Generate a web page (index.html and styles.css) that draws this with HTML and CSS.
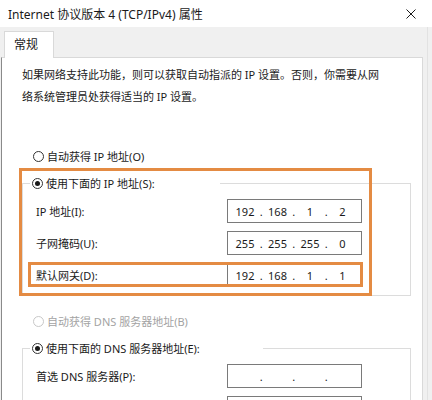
FILE: index.html
```html
<!DOCTYPE html>
<html lang="zh-CN">
<head>
    <meta charset="UTF-8">
    <meta name="viewport" content="width=device-width, initial-scale=1.0">
    <title>Internet 协议版本 4 (TCP/IPv4) 属性</title>
    <link rel="stylesheet" href="styles.css">
</head>
<body>
    <div class="titlebar">
        <span class="title">Internet 协议版本 4 (TCP/IPv4) 属性</span>
        <svg class="close" width="10" height="10" viewBox="0 0 10 10">
            <path d="M0.5 0.5 L9.5 9.5 M9.5 0.5 L0.5 9.5" stroke="#1a1a1a" stroke-width="1" fill="none"/>
        </svg>
    </div>

    <div class="sheet">
        <div class="tabs">
            <div class="tab">常规</div>
        </div>
        <div class="panel">
            <p class="intro">如果网络支持此功能，则可以获取自动指派的 IP 设置。否则，你需要从网<br>络系统管理员处获得适当的 IP 设置。</p>

            <div class="option"><span class="radio"></span>自动获得 IP 地址(O)</div>
            <fieldset class="group">
                <legend class="option legend-ip"><span class="radio on"></span>使用下面的 IP 地址(S):</legend>
                <div class="fields">
                    <label>IP 地址(I):</label>
                    <div class="ip"><span>192</span><span class="dot">.</span><span>168</span><span class="dot">.</span><span>1</span><span class="dot">.</span><span>2</span></div>
                    <label>子网掩码(U):</label>
                    <div class="ip"><span>255</span><span class="dot">.</span><span>255</span><span class="dot">.</span><span>255</span><span class="dot">.</span><span>0</span></div>
                    <label>默认网关(D):</label>
                    <div class="ip"><span>192</span><span class="dot">.</span><span>168</span><span class="dot">.</span><span>1</span><span class="dot">.</span><span>1</span></div>
                </div>
            </fieldset>

            <div class="option disabled spaced"><span class="radio"></span>自动获得 DNS 服务器地址(B)</div>
            <fieldset class="group">
                <legend class="option legend-dns"><span class="radio on"></span>使用下面的 DNS 服务器地址(E):</legend>
                <div class="fields">
                    <label>首选 DNS 服务器(P):</label>
                    <div class="ip"><span></span><span class="dot">.</span><span></span><span class="dot">.</span><span></span><span class="dot">.</span><span></span></div>
                    <span></span>
                    <div class="ip"></div>
                </div>
            </fieldset>
        </div>
    </div>

    <!-- highlight frames drawn over the dialog -->
    <div class="mark mark-ip"></div>
    <div class="mark mark-gw"></div>
</body>
</html>
```

FILE: styles.css
```css
body {
    margin: 0;
    width: 432px;
    height: 400px;
    overflow: hidden;
    background: #f0f0f0;
    font-family: "Noto Sans", "Noto Sans CJK SC", sans-serif;
    font-size: 11px;
    color: #1a1a1a;
}
.titlebar {
    height: 27px;
    background: #fff;
    display: flex;
    align-items: center;
    justify-content: space-between;
    padding: 0 16px 0 8px;
}
.title {
    font-size: 12px;
}
.sheet {
    margin-right: 4px;
    border-right: 1px solid #e2e2e2;
    height: 373px;
}
.tabs {
    height: 30px;
    display: flex;
    align-items: flex-end;
    padding-left: 4px;
}
.tab {
    position: relative;
    z-index: 1;
    width: 50px;
    height: 27px;
    margin-bottom: -1px;
    box-sizing: border-box;
    background: #fff;
    border: 1px solid #d9d9d9;
    border-bottom: none;
    padding-left: 9px;
    line-height: 26px;
    font-size: 12px;
}
.panel {
    height: 343px;
    box-sizing: border-box;
    margin: 0 4px 0 1px;
    background: #fff;
    border-top: 1px solid #d9d9d9;
    border-left: 1px solid #8a8a8a;
    border-right: 1px solid #d9d9d9;
    padding: 6px 11px 0 20px;
    overflow: hidden;
}
.intro {
    margin: 0 0 38px;
    line-height: 22px;
    white-space: nowrap;
}
.option {
    display: flex;
    align-items: center;
    gap: 3px;
    height: 20px;
    padding-left: 11px;
}
.option.spaced {
    margin-top: 15px;
}
.option.disabled {
    color: #a3a3a3;
}
.radio {
    width: 11px;
    height: 11px;
    box-sizing: border-box;
    border: 1px solid #333;
    border-radius: 50%;
    background: #fff;
    display: flex;
    align-items: center;
    justify-content: center;
}
.disabled .radio {
    border-color: #c8c8c8;
}
.radio.on::after {
    content: "";
    width: 5px;
    height: 5px;
    border-radius: 50%;
    background: #1a1a1a;
}
.group {
    margin: 7px 0 0;
    padding: 0;
    min-width: 0;
    border: 1px solid #dcdcdc;
}
.group legend {
    margin-left: 7px;
    padding: 0 0 0 2px;
    box-sizing: border-box;
}
.legend-ip {
    width: 190px;
}
.legend-dns {
    width: 233px;
}
.fields {
    display: grid;
    grid-template-columns: 191px 135px;
    row-gap: 8px;
    align-items: center;
    padding: 6px 0 8px 13px;
}
.ip {
    height: 24px;
    box-sizing: border-box;
    border: 1px solid #7a7a7a;
    background: #fff;
    display: flex;
    align-items: center;
    padding-left: 4px;
}
.ip span {
    width: 26px;
    text-align: center;
}
.ip .dot {
    width: 6.5px;
}
.mark {
    position: absolute;
    box-sizing: border-box;
    border: 3px solid #e48b43;
}
.mark-ip {
    left: 19px;
    top: 168px;
    width: 353px;
    height: 128px;
}
.mark-gw {
    left: 28px;
    top: 262px;
    width: 335px;
    height: 25px;
}
```
